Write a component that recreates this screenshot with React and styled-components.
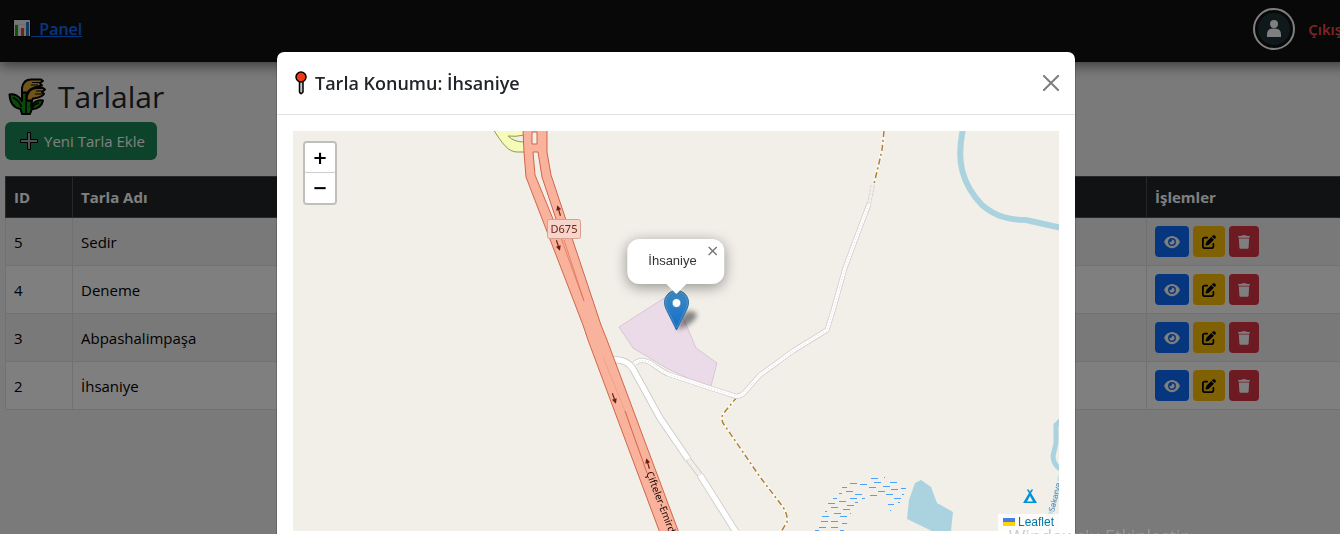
import styled, { createGlobalStyle } from 'styled-components'
import { FaEye, FaPenToSquare, FaTrash } from 'react-icons/fa6'

const GlobalStyle = createGlobalStyle`
  * {
    box-sizing: border-box;
  }
  body {
    margin: 0;
    overflow: hidden;
    background-color: #f5f5f5;
    color: #212529;
    font-family: "Segoe UI", "Open Sans", "Noto Sans", sans-serif;
    font-size: 15px;
    line-height: 24px;
  }
`

/* the page runs a little wider than the window, like a scrolled body */
const Page = styled.div`
  width: calc(100% + 12px);
`
const Navbar = styled.nav`
  display: flex;
  align-items: center;
  justify-content: space-between;
  padding: 8px 10px 12px 11px;
  background-color: #111;
  box-shadow: 0 4px 12px rgba(0, 0, 0, 0.5);
`
const NavLink = styled.a`
  color: ${({ $danger }) => ($danger ? '#ff4d4d' : '#0d6efd')};
  font-size: ${({ $danger }) => ($danger ? '15px' : '16px')};
  font-weight: 600;
  text-decoration: ${({ $danger }) => ($danger ? 'none' : 'underline')};

  svg {
    margin-left: 2px;
    vertical-align: -2px;
  }
`
const NavRight = styled.div`
  display: flex;
  align-items: center;
  gap: 13px;
`
const Avatar = styled.div`
  width: 42px;
  height: 42px;
  padding: 3px;
  border: 2px solid #fff;
  border-radius: 50%;

  svg {
    display: block;
  }
`
const Content = styled.main`
  padding: 16px 5px;
`
const Title = styled.h1`
  display: flex;
  align-items: center;
  gap: 12px;
  margin: 0 0 6px;
  padding-left: 3px;
  font-size: 30px;
  font-weight: 500;
  line-height: 38px;
`
const AddButton = styled.button`
  display: flex;
  align-items: center;
  gap: 6px;
  height: 38px;
  margin-bottom: 16px;
  padding: 0 12px 0 15px;
  border: 0;
  border-radius: 6px;
  background-color: #198754;
  color: #fff;
  font: inherit;
`
const Table = styled.table`
  width: 100%;
  border-collapse: collapse;
  table-layout: fixed;
  background-color: #fff;
`
const IdCol = styled.col`
  width: 67px;
`
const ActionCol = styled.col`
  width: 200px;
`
const HeadCell = styled.th`
  height: 41px;
  padding: 8px;
  border: 1px solid #4d5154;
  background-color: #212529;
  color: #fff;
  text-align: left;
`
const Row = styled.tr`
  &:nth-child(odd) {
    background-color: #f2f2f2;
  }
`
const Cell = styled.td`
  height: 48px;
  padding: 8px;
  border: 1px solid #dee2e6;
  color: #000;
`
const Actions = styled.div`
  display: flex;
  gap: 4px;
`
const buttonKinds = {
  view: { background: '#0d6efd', color: '#fff', icon: 16 },
  edit: { background: '#ffc107', color: '#000', icon: 14 },
  remove: { background: '#dc3545', color: '#fff', icon: 12 },
}
const ActionButton = styled.button`
  display: flex;
  align-items: center;
  height: 31px;
  padding: 0 9px;
  border: 0;
  border-radius: 4px;
  background-color: ${({ $kind }) => buttonKinds[$kind].background};
  color: ${({ $kind }) => buttonKinds[$kind].color};

  svg {
    width: ${({ $kind }) => buttonKinds[$kind].icon}px;
    height: 14px;
  }
`

const Backdrop = styled.div`
  position: fixed;
  inset: 0 -12px 0 0;
  padding-top: 51px;
  overflow: hidden;
  background-color: rgba(0, 0, 0, 0.5);
`
const Modal = styled.section`
  max-width: 800px;
  margin: 0 auto;
  border: 1px solid rgba(0, 0, 0, 0.175);
  border-radius: 8px;
  background-color: #fff;
  background-clip: padding-box;
`
const ModalHeader = styled.header`
  display: flex;
  align-items: center;
  justify-content: space-between;
  padding: 16px;
  border-bottom: 1px solid #dee2e6;
`
const ModalTitle = styled.h2`
  display: flex;
  align-items: center;
  gap: 6px;
  margin: 0;
  font-size: 18px;
  font-weight: 600;
  line-height: 30px;
`
const CloseButton = styled.button`
  display: flex;
  padding: 0;
  border: 0;
  background: none;
  opacity: 0.5;
`
const ModalBody = styled.div`
  padding: 16px;
`
const MapBox = styled.div`
  position: relative;
  height: 400px;
  overflow: hidden;
  background-color: #f2efe9;
  font-family: "Liberation Sans", Arial, sans-serif;
  font-size: 12px;
`
const MapCanvas = styled.svg`
  display: block;
  width: 100%;
  height: 100%;
`
const ZoomControl = styled.div`
  position: absolute;
  top: 10px;
  left: 10px;
  border: 2px solid rgba(0, 0, 0, 0.2);
  border-radius: 4px;
  background-clip: padding-box;
`
const ZoomButton = styled.button`
  display: block;
  width: 30px;
  height: 30px;
  padding: 0;
  border: 0;
  border-radius: 2px;
  background-color: #fff;
  color: #000;
  font: bold 18px/28px "DejaVu Sans", sans-serif;

  &:first-child {
    border-bottom: 1px solid #ccc;
  }
`
const Marker = styled.svg`
  position: absolute;
  top: 50%;
  left: 50%;
  margin: -41px 0 0 -12px;
  overflow: visible;
`
const Popup = styled.div`
  position: absolute;
  bottom: calc(50% + 47px);
  left: 50%;
  padding: 13px 28px 15px 21px;
  border-radius: 12px;
  background-color: #fff;
  box-shadow: 0 3px 14px rgba(0, 0, 0, 0.4);
  color: #333;
  font-size: 13px;
  line-height: 17px;
  transform: translateX(-50%);
`
const PopupTip = styled.svg`
  position: absolute;
  top: 100%;
  left: 50%;
  margin-left: -10px;
`
const PopupClose = styled.button`
  position: absolute;
  top: 0;
  right: 0;
  width: 24px;
  height: 24px;
  padding: 0;
  border: 0;
  background: none;
  color: #757575;
  font: 16px/24px "DejaVu Sans", sans-serif;
`
const Attribution = styled.div`
  position: absolute;
  right: 0;
  bottom: 0;
  padding: 0 5px;
  background-color: rgba(255, 255, 255, 0.8);
  line-height: 17px;

  a {
    color: #0078a8;
    text-decoration: none;
  }
  svg {
    margin-right: 3px;
  }
`
const Watermark = styled.div`
  position: fixed;
  right: 152px;
  bottom: -17px;
  color: rgba(170, 170, 170, 0.6);
  font-size: 18px;
  line-height: 30px;
  white-space: nowrap;
`

const ChartIcon = () => (
  <svg width="18" height="18" viewBox="0 0 18 18">
    <rect x="0.5" y="0.5" width="17" height="17" fill="#ececec" stroke="#000" />
    <path d="M1 5.500h16M1 10.500h16" stroke="#dcdcdc" />
    <rect x="2" y="6" width="3" height="11" fill="#16a516" />
    <rect x="8" y="9" width="3" height="8" fill="#e8402a" />
    <rect x="13" y="3" width="3" height="14" fill="#2374c8" />
  </svg>
)

const WheatIcon = () => (
  <svg width="38" height="38" viewBox="0 0 38 38" stroke="#000" strokeWidth="2" strokeLinejoin="round">
    <path d="M14 15V10C15 4 18 1.500 23 1.500h10l2 1.500-3 2 2 2.500C29 9 22 10 20 14l-1.500 2z" fill="#e2a935" />
    <path d="M14 14.500h4.500v8H24l-1 6c3-5 7-7 12-6-1 5-5 9-11 8.500L22 36h-8l-1.500-5C6 30 2 25 1.500 16.500 6 15.500 11 18 14 23z" fill="#129512" />
    <path d="M18.500 22.500C18.500 14 22 10.500 28 10h7l2 1.500-3 2.500 2 2c-3 4-8 4-11 4.500l-1 2z" fill="#e2a935" />
    <path d="M5 19.500c4 2 7 5 8.500 9.500M31 25c-4 1-6 3-8 5.500M18 24v11" fill="none" strokeWidth="1.500" />
    <path d="M24 4.500h8M23 7h7M28 13h6M27 16h7" fill="none" strokeWidth="1" />
  </svg>
)

const PlusIcon = () => (
  <svg width="18" height="18" viewBox="0 0 18 18">
    <path d="M7.500 0.500h3v7h7v3h-7v7h-3v-7h-7v-3h7z" fill="#a0a0a0" stroke="#000" />
  </svg>
)

const PinIcon = () => (
  <svg width="16" height="24" viewBox="0 0 16 24" stroke="#000">
    <path d="M6.500 10h3.500v11l-1.500 1.500h-1L6.500 21z" fill="#c4c4c4" strokeWidth="1.500" />
    <circle cx="8" cy="6" r="5" fill="#f03a17" strokeWidth="1.500" />
  </svg>
)

const UserIcon = () => (
  <svg width="32" height="32" viewBox="0 0 32 32">
    <circle cx="16" cy="16" r="16" fill="#1e3238" />
    <circle cx="16" cy="11" r="4" fill="#fff" />
    <path d="M9 24v-2.500q0-6 6-6h2q6 0 6 6V24z" fill="#fff" />
  </svg>
)

const dashes = [
  [871, 478, 7], [884, 477, 1], [874, 482, 7], [850, 483, 7], [860, 484, 7], [890, 482, 7],
  [883, 486, 7], [842, 487, 5], [869, 487, 7], [846, 491, 7], [891, 489, 7], [901, 488, 5],
  [839, 493, 3], [855, 494, 7], [878, 491, 7], [870, 495, 7], [886, 494, 7], [902, 494, 2],
  [833, 498, 4], [862, 498, 3], [850, 498, 7], [894, 498, 7], [839, 501, 7], [828, 503, 7],
  [855, 502, 3], [888, 504, 6], [898, 502, 2], [847, 505, 7], [831, 507, 7], [890, 510, 1],
  [843, 509, 7], [825, 511, 2], [834, 513, 7], [850, 513, 1], [822, 516, 7], [840, 516, 7],
  [821, 521, 7], [831, 521, 7], [842, 523, 5], [819, 527, 7], [831, 527, 7], [815, 530, 4], [840, 530, 4],
]

const whiteRoad = 'M612 360C621 359 628 361 633 369L660 418 688 459'
const lowerRoad = 'M700 475L736 532'
const track = 'M634 364C638 360 644 360 649 362 657 367 661 371 668 374L707 387 735 396Q740 397 744 393L760 375 793 351 827 330 833 311 845 268 858 233 869 204'
const footpaths = ['M884 131L882 150 879 163 874 184', 'M737 397L723 414Q721 418 723 423L760 477 783 507Q788 515 787 522L781 532']

const Arrow = ({ x, y, angle }) => (
  <g transform={`translate(${x} ${y}) rotate(${angle})`}>
    <path d="M0 5V-2" stroke="#6b1f10" strokeWidth="1.200" />
    <path d="M0-6L2.500-1h-5z" fill="#6b1f10" />
  </g>
)

const FieldMap = () => (
  <MapCanvas viewBox="293 131 766 400" preserveAspectRatio="xMidYMid slice" aria-hidden="true">
    {/* water */}
    <g fill="none" stroke="#aad3df" strokeWidth="6">
      <path d="M963 129C956 161 962 184 982 205 996 217 1010 220 1026 220L1062 228" />
      <path d="M1061 420L1056 425V443L1053 456Q1053 464 1060 469" strokeWidth="5" />
      <path d="M1060 476C1056 496 1056 508 1040 531" strokeWidth="4" strokeDasharray="5 2" opacity="0.6" />
    </g>
    <path d="M915 483l6-3 10 7 6 16 16 9-2 19h-19l-25-12 2-19z" fill="#aad3df" />
    <g fill="#4aa3f8">
      {dashes.map(([x, y, width]) => (
        <rect key={`${x}-${y}`} x={x} y={y} width={width} height="1" />
      ))}
    </g>
    <text x="1054" y="512" transform="rotate(-76 1054 512)" fill="#4d80b3" fontSize="8" fontFamily="Noto Sans">
      Sakarya
    </text>

    {/* field parcel */}
    <path d="M619 327L672 293 685 322 696 348 717 363 711 386Q689 380 668 369L633 348z" fill="#ebdbe8" stroke="#d3bccf" strokeWidth="0.800" />

    {/* minor roads and tracks */}
    <g fill="none" strokeLinejoin="round">
      {footpaths.map((d) => (
        <g key={d}>
          <path d={d} stroke="#fff" strokeWidth="3" opacity="0.6" />
          <path d={d} stroke="#ac8331" strokeWidth="1.500" strokeDasharray="6 3 2 3" />
        </g>
      ))}
      <path d="M688 459L700 475" stroke="#c4c4c4" strokeWidth="6" />
      <path d="M688 459L700 475" stroke="#f2efe9" strokeWidth="4.500" />
      <path d="M869 204L873 184" stroke="#ccc" strokeWidth="4" strokeDasharray="3 1" />
      <path d="M869 205L873 183" stroke="#f2efe9" strokeWidth="2.500" />
      <path d={track} stroke="#cfcdca" strokeWidth="5" />
      <path d={whiteRoad} stroke="#c8c6c3" strokeWidth="7" />
      <path d={lowerRoad} stroke="#c8c6c3" strokeWidth="7" />
      <path d={track} stroke="#fff" strokeWidth="3.500" />
      <path d={track} stroke="#dad8d4" strokeWidth="1" strokeDasharray="1 2" />
      <path d={whiteRoad} stroke="#fff" strokeWidth="5.500" />
      <path d={lowerRoad} stroke="#fff" strokeWidth="5.500" />
    </g>

    {/* slip road */}
    <path d="M493 129C502 143 508 152 517 152H526V129z" fill="#f6fabb" stroke="#8f9b42" />
    <path d="M508 136Q516 137 524 135V142Q514 142 508 136z" fill="#f2efe9" stroke="#8f9b42" />

    {/* D675 */}
    <path d="M523 129L524 152 526 177 583 325 588 340 660 533H679L607 340 601 325 551 175 547 152V129z" fill="#f9b29c" stroke="#d3654a" />
    <path d="M532 132h5v12h-5zM533 152h5l4 25 16 48-5-6-18-44z" fill="#f2efe9" stroke="#d3654a" />
    <path d="M561 238L584 301 564 240" fill="none" stroke="#d3654a" strokeWidth="0.600" />
    <path d="M603 357L625 411" stroke="#e89078" strokeWidth="0.500" />
    <path d="M625 411L647 473" stroke="#d3654a" strokeWidth="1" />
    <Arrow x={559} y={211} angle={-17} />
    <Arrow x={558} y={245} angle={161} />
    <Arrow x={614} y={398} angle={161} />
    <Arrow x={648} y={464} angle={-17} />
    <text x="646" y="473" transform="rotate(69 646 473)" fill="#1c0a05" fontSize="10" fontFamily="Noto Sans">
      Çifteler-Emird
    </text>
    <rect x="547.500" y="219.500" width="33" height="19" rx="2" fill="#f6d5cc" stroke="#dc9f8d" />
    <text x="564" y="233" textAnchor="middle" fill="#6b1f10" fontSize="11" fontFamily="Noto Sans">D675</text>

    {/* camp site */}
    <path d="M1028 489l2 2.500 2-2.500 1 1-2 3 6 10h-14l6-10-2-3zM1030 496l-3 5.500h6z" fill="#0092da" fillRule="evenodd" />
  </MapCanvas>
)

const fields = [
  { id: 5, name: 'Sedir' },
  { id: 4, name: 'Deneme' },
  { id: 3, name: 'Abpashalimpaşa' },
  { id: 2, name: 'İhsaniye' },
]

const FieldRow = ({ field }) => (
  <Row>
    <Cell>{field.id}</Cell>
    <Cell>{field.name}</Cell>
    <Cell>
      <Actions>
        <ActionButton $kind="view" aria-label="Göster"><FaEye /></ActionButton>
        <ActionButton $kind="edit" aria-label="Düzenle"><FaPenToSquare /></ActionButton>
        <ActionButton $kind="remove" aria-label="Sil"><FaTrash /></ActionButton>
      </Actions>
    </Cell>
  </Row>
)

const LocationModal = ({ name }) => (
  <Backdrop>
    <Modal role="dialog" aria-labelledby="location-title">
      <ModalHeader>
        <ModalTitle id="location-title">
          <PinIcon />
          Tarla Konumu: {name}
        </ModalTitle>
        <CloseButton aria-label="Kapat">
          <svg width="16" height="16" viewBox="0 0 16 16">
            <path d="M.7.7l14.600 14.600M15.300.7L.7 15.300" stroke="#000" strokeWidth="2" strokeLinecap="round" />
          </svg>
        </CloseButton>
      </ModalHeader>
      <ModalBody>
        <MapBox>
          <FieldMap />
          <Marker width="25" height="41" viewBox="0 0 25 41">
            <defs>
              <linearGradient id="pin" x1="0" y1="0" x2="0" y2="1">
                <stop offset="0" stopColor="#3f8ec6" />
                <stop offset="1" stopColor="#1169c4" />
              </linearGradient>
              <filter id="soft" x="-50%" y="-50%" width="200%" height="200%">
                <feGaussianBlur stdDeviation="2.500" />
              </filter>
            </defs>
            <path d="M13 40L19 24Q27 18 33 24 32 33 13 40z" fill="#000" opacity="0.45" filter="url(#soft)" />
            <path d="M12.500.5C5.800.5.5 6 .5 12.500c0 2.500.9 5 1.900 7.200L12.500 40l10.100-20.300c1-2.200 1.900-4.700 1.900-7.200C24.500 6 19.200.5 12.500.5z" fill="url(#pin)" stroke="#2b6f9f" />
            <path d="M12.500 1.600C6.500 1.600 1.600 6.500 1.600 12.500c0 2.400.8 4.700 1.800 6.800L12.500 37.500l9.100-18.200c1-2.100 1.800-4.400 1.800-6.800 0-6-4.900-10.900-10.900-10.900z" fill="none" stroke="#fff" opacity="0.15" />
            <circle cx="12.500" cy="13" r="4.500" fill="#fff" stroke="#2f7cb8" />
          </Marker>
          <Popup>
            {name}
            <PopupClose aria-label="Kapat">×</PopupClose>
            <PopupTip width="20" height="10" viewBox="0 0 20 10">
              <path d="M0 0h20L10 10z" fill="#fff" />
            </PopupTip>
          </Popup>
          <ZoomControl>
            <ZoomButton aria-label="Yakınlaştır">+</ZoomButton>
            <ZoomButton aria-label="Uzaklaştır">−</ZoomButton>
          </ZoomControl>
          <Attribution>
            <a href="#leaflet">
              <svg width="12" height="8" viewBox="0 0 12 8">
                <path d="M0 0h12v4H0z" fill="#4c7be1" />
                <path d="M0 4h12v4H0z" fill="#ffd500" />
              </svg>
              Leaflet
            </a>
          </Attribution>
        </MapBox>
      </ModalBody>
    </Modal>
  </Backdrop>
)

const App = () => {
  return (
    <>
      <GlobalStyle />
      <Page>
        <Navbar>
          <NavLink href="#panel">
            <ChartIcon />{'\u00a0\u00a0'}Panel
          </NavLink>
          <NavRight>
            <Avatar><UserIcon /></Avatar>
            <NavLink href="#cikis" $danger>Çıkış</NavLink>
          </NavRight>
        </Navbar>
        <Content>
          <Title><WheatIcon />Tarlalar</Title>
          <AddButton><PlusIcon />Yeni Tarla Ekle</AddButton>
          <Table>
            <colgroup>
              <IdCol />
              <col />
              <ActionCol />
            </colgroup>
            <thead>
              <tr>
                <HeadCell>ID</HeadCell>
                <HeadCell>Tarla Adı</HeadCell>
                <HeadCell>İşlemler</HeadCell>
              </tr>
            </thead>
            <tbody>
              {fields.map((field) => <FieldRow key={field.id} field={field} />)}
            </tbody>
          </Table>
        </Content>
      </Page>
      <LocationModal name="İhsaniye" />
      <Watermark>Windows'u Etkinleştir</Watermark>
    </>
  )
}

export default App
